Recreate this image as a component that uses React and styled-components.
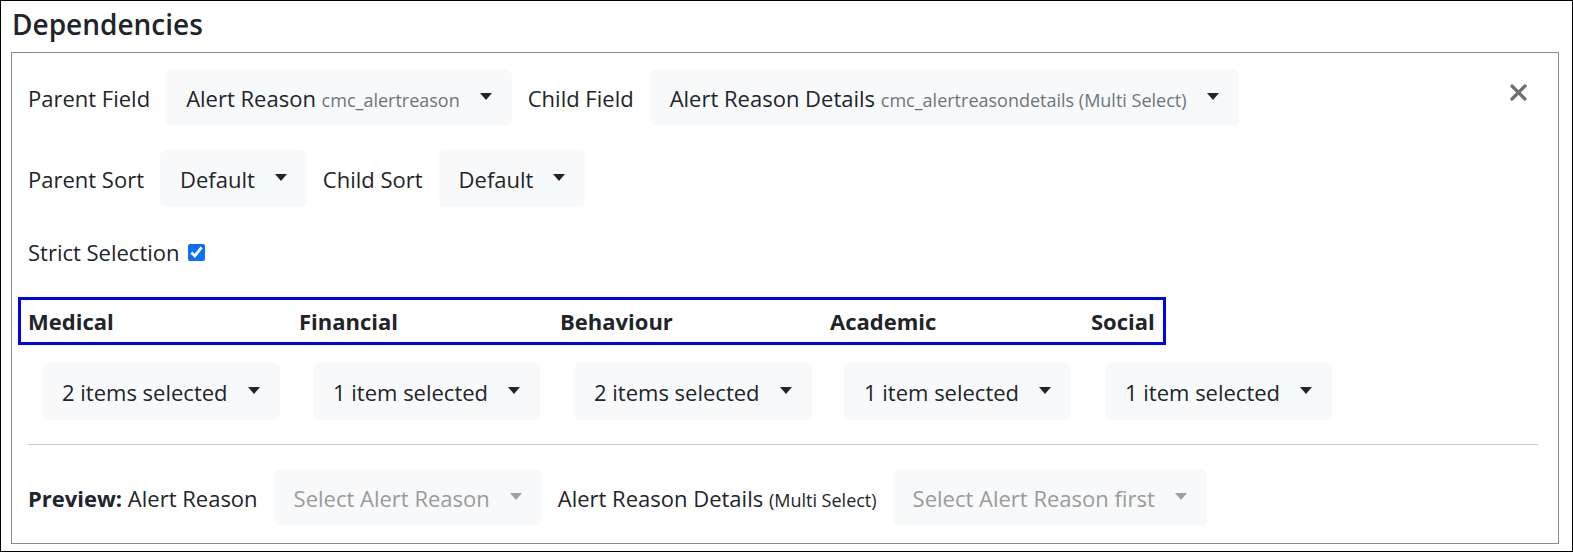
import React from "react";
import styled, { createGlobalStyle } from "styled-components";

const GlobalStyle = createGlobalStyle`
  html, body {
    margin: 0;
    padding: 0;
    background: #fff;
  }
  body {
    font-family: "Open Sans", "Noto Sans", sans-serif;
    color: #212529;
  }
  * { box-sizing: border-box; }
`;

const Frame = styled.div`
  width: 1573px;
  height: 552px;
  border: 1px solid #000;
  padding: 0 13px 0 10px;
  display: flex;
  flex-direction: column;
`;

const Title = styled.h2`
  margin: 4px 0 0 1px;
  font-size: 28px;
  font-weight: 600;
  line-height: 38px;
  height: 47px;
`;

const Panel = styled.div`
  border: 1px solid #8a8a8a;
  padding: 16px 20px 17px 16px;
  display: flex;
  flex-direction: column;
`;

const Row = styled.div`
  display: flex;
  align-items: center;
  gap: 16px;
  margin-bottom: ${p => p.$mb || 0}px;
`;

const Label = styled.span`
  font-size: 22px;
  white-space: nowrap;
  display: inline-flex;
  align-items: center;
  gap: 6px;
`;

const Small = styled.span`
  font-size: ${p => p.$size || 18}px;
  color: ${p => p.$color || "inherit"};
`;

const Bold = styled.strong`
  font-weight: 700;
`;

const Select = styled.div`
  height: 57px;
  display: inline-flex;
  align-items: center;
  gap: 20px;
  padding: 0 20px;
  background: #f8f9fa;
  border-radius: 6px;
  font-size: 22px;
  white-space: nowrap;
  color: ${p => (p.$disabled ? "#9a9b9c" : "#212529")};
`;

const Caret = styled.span`
  width: 0;
  height: 0;
  border-top: 7px solid ${p => (p.$disabled ? "#a0a0a0" : "#212529")};
  border-left: 6px solid transparent;
  border-right: 6px solid transparent;
  margin-top: -2px;
`;

const Close = styled.button`
  margin-left: auto;
  margin-right: 11px;
  align-self: flex-start;
  margin-top: 15px;
  background: none;
  border: none;
  padding: 0;
  display: flex;
  cursor: pointer;
`;

const Check = styled.input`
  width: 17px;
  height: 17px;
  margin: 0 0 0 2px;
  accent-color: #0d6efd;
`;

const HeadRow = styled.div`
  display: flex;
  align-self: flex-start;
  border: 3px solid #0000f0;
  height: 48px;
  align-items: center;
  padding: 0 8px 0 7px;
  margin: 0 0 18px -10px;
`;

const Heading = styled.div`
  width: ${p => (p.$w ? `${p.$w}px` : "auto")};
  font-size: 22px;
  font-weight: 700;
`;

const SelRow = styled.div`
  display: flex;
  padding-left: 14px;
`;

const Cell = styled.div`
  width: ${p => (p.$w ? `${p.$w}px` : "auto")};
`;

const Divider = styled.hr`
  border: none;
  border-top: 1px solid #cacbcc;
  margin: 24px 0 24px;
`;

const columns = [
  { name: "Medical", value: "2 items selected", w: 271 },
  { name: "Financial", value: "1 item selected", w: 261 },
  { name: "Behaviour", value: "2 items selected", w: 270 },
  { name: "Academic", value: "1 item selected", w: 261 },
  { name: "Social", value: "1 item selected" }
];

const Dropdown = ({ children, disabled }) => (
  <Select $disabled={disabled}>
    <span>{children}</span>
    <Caret $disabled={disabled} />
  </Select>
);

export default function App() {
  return (
    <>
      <GlobalStyle />
      <Frame>
        <Title>Dependencies</Title>
        <Panel>
          <Row $mb={24}>
            <Label>Parent Field</Label>
            <Dropdown>
              Alert Reason <Small $color="#6c757d">cmc_alertreason</Small>
            </Dropdown>
            <Label>Child Field</Label>
            <Dropdown>
              Alert Reason Details{" "}
              <Small $color="#6c757d">cmc_alertreasondetails (Multi Select)</Small>
            </Dropdown>
            <Close aria-label="Remove">
              <svg width="17" height="17" viewBox="0 0 17 17">
                <path
                  d="M2 2 L15 15 M15 2 L2 15"
                  stroke="#6f6f6f"
                  strokeWidth="3.2"
                  strokeLinecap="round"
                />
              </svg>
            </Close>
          </Row>
          <Row $mb={30}>
            <Label>Parent Sort</Label>
            <Dropdown>Default</Dropdown>
            <Label>Child Sort</Label>
            <Dropdown>Default</Dropdown>
          </Row>
          <Row $mb={30}>
            <Label>
              Strict Selection
              <Check type="checkbox" defaultChecked />
            </Label>
          </Row>
          <HeadRow>
            {columns.map(c => (
              <Heading key={c.name} $w={c.w}>
                {c.name}
              </Heading>
            ))}
          </HeadRow>
          <SelRow>
            {columns.map(c => (
              <Cell key={c.name} $w={c.w}>
                <Dropdown>{c.value}</Dropdown>
              </Cell>
            ))}
          </SelRow>
          <Divider />
          <Row>
            <Label>
              <span>
                <Bold>Preview:</Bold> Alert Reason
              </span>
            </Label>
            <Dropdown disabled>Select Alert Reason</Dropdown>
            <Label>
              <span>
                Alert Reason Details <Small>(Multi Select)</Small>
              </span>
            </Label>
            <Dropdown disabled>Select Alert Reason first</Dropdown>
          </Row>
        </Panel>
      </Frame>
    </>
  );
}
